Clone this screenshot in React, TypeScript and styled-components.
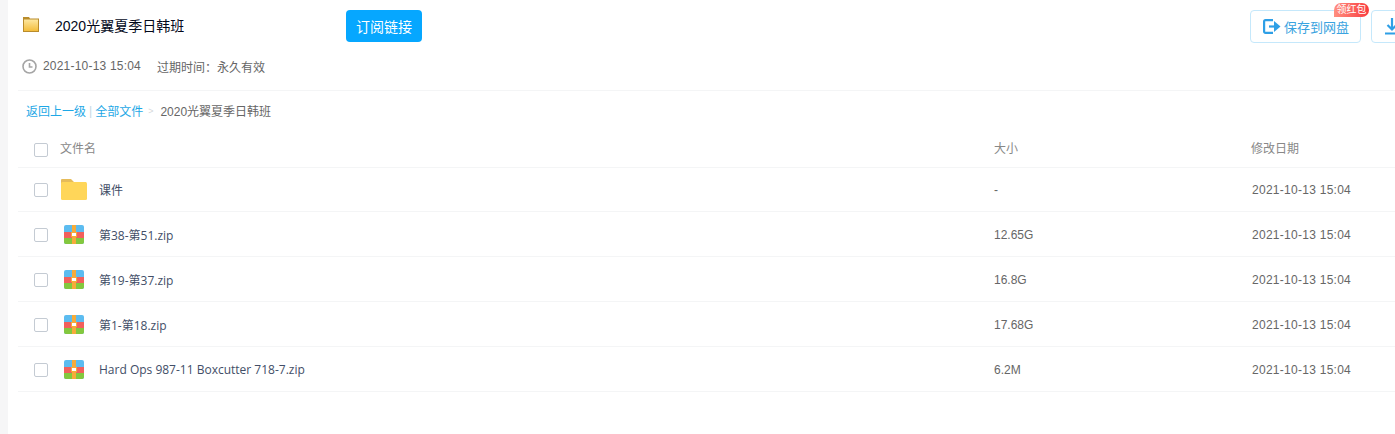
import React from 'react';
import styled, { createGlobalStyle } from 'styled-components';

const GlobalStyle = createGlobalStyle`
  html, body {
    margin: 0;
    height: 100%;
    overflow: hidden;
    background: #f6f6f7;
  }
  body {
    font-family: "Liberation Sans", "Noto Sans CJK SC", sans-serif;
  }
`;

const Page = styled.div`
  margin-left: 8px;
  width: 1500px;
  height: 434px;
  background: #fff;
`;

const Head = styled.div`
  margin-left: 10px;
  height: 80px;
  padding-top: 10px;
  border-bottom: 1px solid #f4f5f6;
`;

const TitleRow = styled.div`
  display: flex;
  align-items: center;
  height: 33px;
  padding-left: 5px;
`;

const FolderMark = styled.span`
  display: flex;
  margin-bottom: 5px;
`;

const Title = styled.h2`
  width: 291px;
  margin: 0 0 4px 16px;
  font-size: 14px;
  font-weight: 400;
  color: #03081a;
  white-space: nowrap;
`;

const SubscribeButton = styled.button`
  width: 76px;
  height: 32px;
  margin-top: -1px;
  border: 0;
  border-radius: 4px;
  padding: 0;
  background: #06a7ff;
  color: #fff;
  font: inherit;
  font-size: 14px;
`;

const Actions = styled.div`
  display: flex;
  gap: 10px;
  margin-left: 828px;
`;

const ActionButton = styled.button`
  position: relative;
  display: flex;
  align-items: center;
  gap: 3px;
  box-sizing: border-box;
  width: 111px;
  height: 33px;
  padding: 0 0 0 12px;
  border: 1px solid #c5e8fb;
  border-radius: 4px;
  background: #fff;
  color: #3aa3e0;
  font: inherit;
  font-size: 13px;
`;

const Badge = styled.span`
  position: absolute;
  top: -8px;
  right: -9px;
  width: 35px;
  height: 14px;
  border-radius: 7px 7px 7px 0;
  background: linear-gradient(90deg, #ff8f80, #f93b3e);
  color: #fff;
  font-size: 10px;
  line-height: 14px;
  text-align: center;
`;

const MetaRow = styled.div`
  display: flex;
  align-items: center;
  height: 14px;
  margin-top: 16px;
  padding-left: 4px;
  font-size: 12px;
  color: #666;
`;

const MetaTime = styled.span`
  margin-left: 6px;
  width: 114px;
  letter-spacing: 0.2px;
`;

const Crumbs = styled.div`
  display: flex;
  align-items: center;
  height: 39px;
  padding-left: 18px;
  font-size: 12px;
  color: #666;
`;

const CrumbLink = styled.a`
  color: #1ea8e6;
`;

const CrumbBar = styled.span`
  margin: 0 3px;
  color: #c4d8e4;
`;

const CrumbArrow = styled.span`
  margin: 0 7px 0 5px;
  color: #d4d7da;
  font-size: 9px;
`;

const FileList = styled.div`
  margin-left: 10px;
`;

const Row = styled.div<{ $height: number; $drop?: number }>`
  display: grid;
  grid-template-columns: 976px 258px 1fr;
  align-items: center;
  box-sizing: border-box;
  height: ${(props) => props.$height}px;
  padding-top: ${(props) => props.$drop || 0}px;
  border-bottom: 1px solid #f4f5f6;
  font-size: 12px;
  color: #666;
`;

const NameCell = styled.div`
  display: flex;
  align-items: center;
  padding-left: 16px;
`;

const Checkbox = styled.span`
  box-sizing: border-box;
  width: 14px;
  height: 14px;
  border: 1px solid #c4cbd3;
  border-radius: 2px;
  background: #fff;
`;

const HeadCheckbox = styled(Checkbox)`
  margin-top: 2px;
`;

const HeadCell = styled.span`
  margin-bottom: 2px;
  color: #888;
`;

const HeadLabel = styled(HeadCell)`
  margin-left: 12px;
`;

const DateHead = styled(HeadCell)`
  margin-left: -1px;
`;

const IconBox = styled.span`
  display: flex;
  justify-content: center;
  width: 26px;
  margin: 0 12px 0 13px;
`;

const FileName = styled.span`
  color: #424e67;
  font-family: "Open Sans", "Noto Sans CJK SC", sans-serif;
  white-space: nowrap;
`;

const DateText = styled.span`
  letter-spacing: 0.27px;
`;

const FolderSmall = () => (
  <svg width="16" height="15" viewBox="0 0 16 15">
    <defs>
      <linearGradient id="folderFill" x1="0" y1="0" x2="0" y2="1">
        <stop offset="0" stopColor="#fde7a0" />
        <stop offset="1" stopColor="#f3bd3c" />
      </linearGradient>
    </defs>
    <path d="M0 0h6l1 1.500h9V15H0z" fill="#b98c2c" />
    <rect x="1" y="2.500" width="14" height="11.500" fill="url(#folderFill)" />
  </svg>
);

const Clock = () => (
  <svg width="15" height="15" viewBox="0 0 15 15" fill="none" stroke="#a5a5a5" strokeWidth="1.600">
    <circle cx="7.500" cy="7.500" r="6.500" />
    <path d="M7.500 4v4h3" />
  </svg>
);

const SaveIcon = () => (
  <svg width="18" height="15" viewBox="0 0 18 15" fill="none" stroke="#2e9fe6" strokeWidth="2.200">
    <path d="M10 1.100H2.500a1.400 1.400 0 0 0-1.400 1.400v10a1.400 1.400 0 0 0 1.400 1.400H10" />
    <path d="M6 7.500h7" />
    <path d="M11 2l6.500 5.500-6.500 5.500z" fill="#2e9fe6" stroke="none" />
  </svg>
);

const DownloadIcon = () => (
  <svg width="16" height="17" viewBox="0 0 16 17" fill="none" stroke="#2e9fe6" strokeWidth="2.200">
    <path d="M8 0v11M3.500 7l4.500 4.500L12.500 7M1 15.500h14" />
  </svg>
);

const FolderIcon = () => (
  <svg width="26" height="21" viewBox="0 0 26 21">
    <path d="M1 0h9l3 3h12v4H0V1a1 1 0 0 1 1-1z" fill="#e6bc5a" />
    <rect y="3" width="26" height="18" rx="1.500" fill="#ffd659" />
  </svg>
);

const ZipIcon = () => (
  <svg width="20" height="19" viewBox="0 0 20 19">
    <rect width="20" height="19" rx="2" fill="#5cbcf0" />
    <rect y="7" width="20" height="6" fill="#f2605c" />
    <path d="M0 13h20v4a2 2 0 0 1-2 2H2a2 2 0 0 1-2-2z" fill="#83c83e" />
    <rect x="8" width="4" height="19" fill="#f6ab3a" />
    <rect x="7" y="7" width="6" height="5" fill="#f6ab3a" />
    <rect x="8" y="8" width="4" height="3" fill="#fff" />
  </svg>
);

const files = [
  { name: '课件', size: '-', folder: true, height: 44, drop: 0 },
  { name: '第38-第51.zip', size: '12.65G', folder: false, height: 45, drop: 1 },
  { name: '第19-第37.zip', size: '16.8G', folder: false, height: 45, drop: 1 },
  { name: '第1-第18.zip', size: '17.68G', folder: false, height: 45, drop: 1 },
  { name: 'Hard Ops 987-11 Boxcutter 718-7.zip', size: '6.2M', folder: false, height: 45, drop: 1 },
];

function App() {
  return (
    <Page>
      <GlobalStyle />
      <Head>
        <TitleRow>
          <FolderMark>
            <FolderSmall />
          </FolderMark>
          <Title>2020光翼夏季日韩班</Title>
          <SubscribeButton>订阅链接</SubscribeButton>
          <Actions>
            <ActionButton>
              <SaveIcon />
              保存到网盘
              <Badge>领红包</Badge>
            </ActionButton>
            <ActionButton aria-label="下载">
              <DownloadIcon />
            </ActionButton>
          </Actions>
        </TitleRow>
        <MetaRow>
          <Clock />
          <MetaTime>2021-10-13 15:04</MetaTime>
          <span>过期时间：永久有效</span>
        </MetaRow>
      </Head>
      <Crumbs>
        <CrumbLink>返回上一级</CrumbLink>
        <CrumbBar>|</CrumbBar>
        <CrumbLink>全部文件</CrumbLink>
        <CrumbArrow>&gt;</CrumbArrow>
        2020光翼夏季日韩班
      </Crumbs>
      <FileList>
        <Row $height={38}>
          <NameCell>
            <HeadCheckbox />
            <HeadLabel>文件名</HeadLabel>
          </NameCell>
          <HeadCell>大小</HeadCell>
          <DateHead>修改日期</DateHead>
        </Row>
        {files.map((file) => (
          <Row key={file.name} $height={file.height} $drop={file.drop}>
            <NameCell>
              <Checkbox />
              <IconBox>{file.folder ? <FolderIcon /> : <ZipIcon />}</IconBox>
              <FileName>{file.name}</FileName>
            </NameCell>
            <span>{file.size}</span>
            <DateText>2021-10-13 15:04</DateText>
          </Row>
        ))}
      </FileList>
    </Page>
  );
}

export default App;
